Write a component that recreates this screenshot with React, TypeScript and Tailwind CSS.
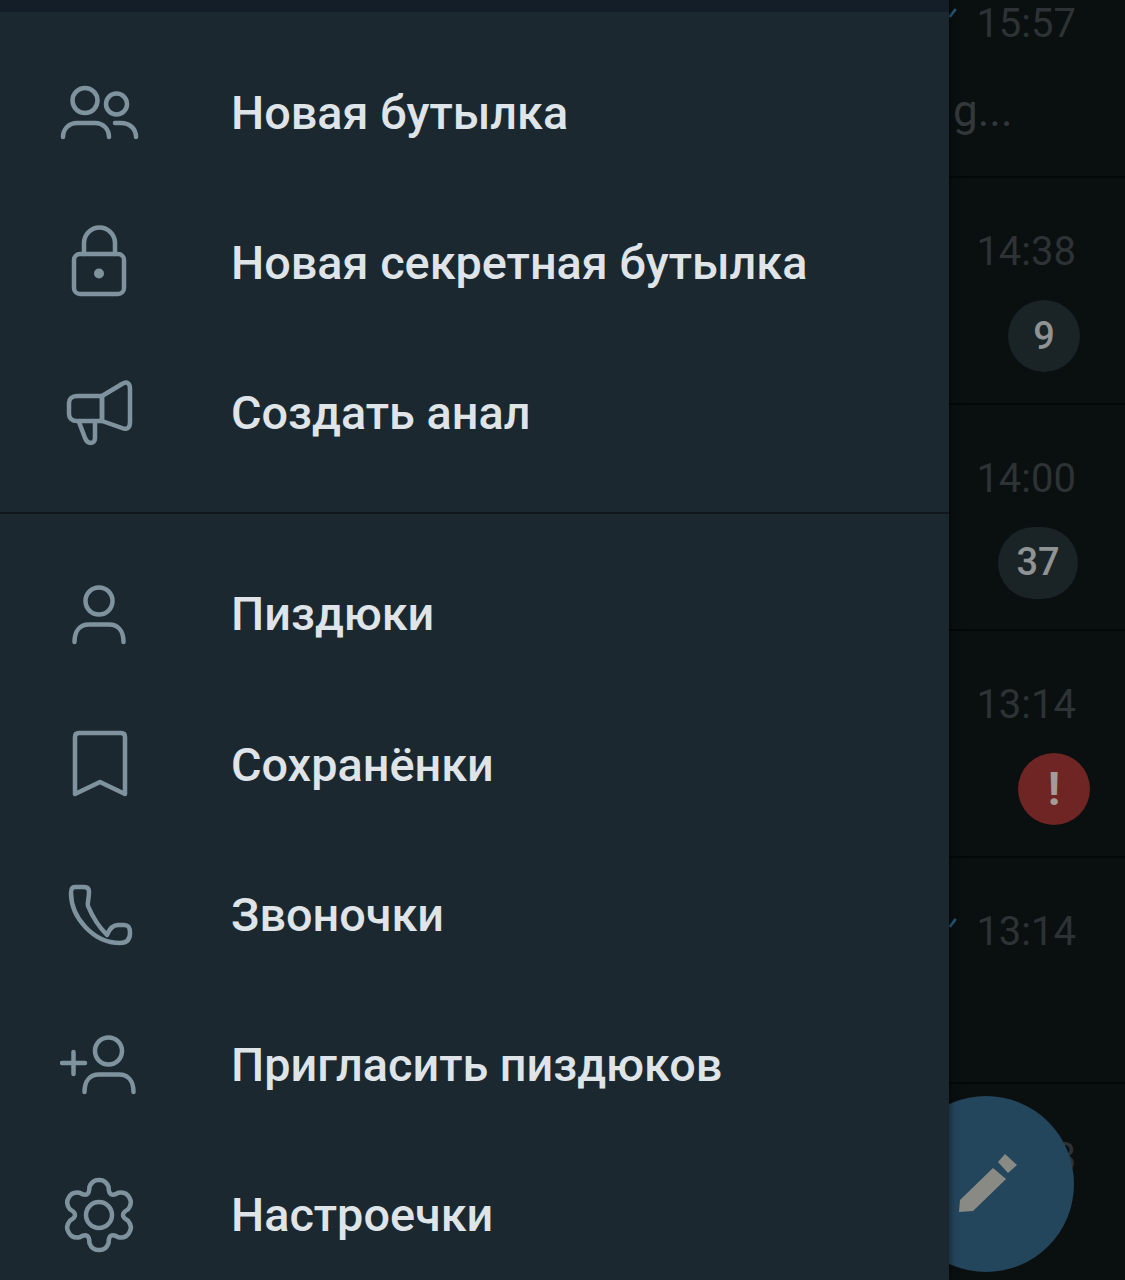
import type { ReactNode } from 'react';

const gearPath = () => {
  const pts: string[] = [];
  for (let i = 0; i < 6; i++) {
    const mid = -90 + i * 60;
    const at = (deg: number, r: number) => {
      const a = (deg * Math.PI) / 180;
      return `${(39 + r * Math.cos(a)).toFixed(1)} ${(39 + r * Math.sin(a)).toFixed(1)}`;
    };
    const cmd = i === 0 ? 'M' : 'L';
    pts.push(`${cmd}${at(mid - 19, 29.5)}`);
    pts.push(`Q${at(mid - 11, 36)} ${at(mid, 35)}`);
    pts.push(`Q${at(mid + 11, 36)} ${at(mid + 19, 29.5)}`);
    pts.push(`Q${at(mid + 30, 19)} ${at(mid + 41, 29.5)}`);
  }
  return pts.join(' ') + ' Z';
};

const Icon = ({ children }: { children: ReactNode }) => (
  <svg
    viewBox="0 0 80 80"
    fill="none"
    stroke="#7e939e"
    strokeWidth="4.5"
    strokeLinecap="round"
    strokeLinejoin="round"
    className="w-20 h-20 shrink-0"
  >
    {children}
  </svg>
);

const icons = {
  users: (
    <Icon>
      <circle cx="25" cy="27.5" r="12.5" />
      <circle cx="56.5" cy="31" r="10.5" />
      <path d="M3 64C3 56 9 50 17 50H35C43 50 49 56 49 64" />
      <path d="M55 50H61C70 50 76 56 76 64" />
    </Icon>
  ),
  lock: (
    <Icon>
      <rect x="14" y="31" width="50" height="40" rx="6" />
      <path d="M24 31V20A15.5 15.5 0 0 1 55 20V31" />
      <circle cx="39" cy="50.5" r="5" fill="#7e939e" stroke="none" />
    </Icon>
  ),
  megaphone: (
    <Icon>
      <path d="M42 22H17C12 22 9 25 9 29V40C9 44 12 47 17 47H42Z" />
      <path d="M42 22L62 10C67 7 70 9 70 15V48C70 54 67 56 62 54L42 47Z" />
      <path d="M19 48L25 64C28 71 35 70 35 64V48" />
    </Icon>
  ),
  person: (
    <Icon>
      <circle cx="39" cy="26" r="13.5" />
      <path d="M14.5 67C14.5 56 20 49.5 29 49.5H49C58 49.5 63.5 56 63.5 67" />
    </Icon>
  ),
  bookmark: (
    <Icon>
      <path d="M15 12Q15 8 19 8H61Q65 8 65 12V69L40 57L15 69Z" />
    </Icon>
  ),
  phone: (
    <Icon>
      <path d="M15 12H24Q29 12 29 17C29 24 27 28 28 31C33 43 39 52 47 60C49 55 52 50 58 50H64C69 50 70 53 70 58C70 65 66 68 60 68C33 68 11 42 11 18C11 14 12 12 15 12Z" />
    </Icon>
  ),
  invite: (
    <Icon>
      <circle cx="48.5" cy="25" r="13.5" />
      <path d="M24.5 66C24.5 55 30 48.5 39 48.5H59C68 48.5 73.5 55 73.5 66" />
      <path d="M2 37H25M13.5 26V48" />
    </Icon>
  ),
  gear: (
    <Icon>
      <path d={gearPath()} />
      <circle cx="39" cy="39" r="13" />
    </Icon>
  ),
};

const MenuRow = ({ icon, label }: { icon: ReactNode; label: string }) => (
  <div className="flex items-center h-[150.25px] pl-[60px]">
    {icon}
    <span className="ml-[91px] text-[46.8px] font-medium leading-none text-[#dfe4e8]">{label}</span>
  </div>
);

const chats = [
  { time: '14:38', badge: '9', badgeClass: 'w-[72px] mr-[-4px] bg-[#1a2427] text-[#8f9393] text-[38px] font-medium' },
  { time: '14:00', badge: '37', badgeClass: 'w-[80px] mr-[-2px] bg-[#1a2427] text-[#8f9393] text-[38px] font-medium' },
  { time: '13:14', badge: '!', badgeClass: 'w-[72px] mr-[-14px] bg-[#6e2523] text-[#a39c9a] text-[46px] font-bold' },
];

const Check = ({ className }: { className: string }) => (
  <svg viewBox="0 0 12 14" className={className} fill="none" stroke="#275a7c" strokeWidth="4">
    <path d="M1 13L10 1" />
  </svg>
);

export default function App() {
  return (
    <div className="relative flex w-[1125px] h-[1280px] overflow-hidden bg-[#0a0f10] font-['Roboto',sans-serif]">
      {/* Drawer */}
      <div className="relative z-10 w-[949px] shrink-0 h-full bg-[#1c2830] shadow-[0_0_8px_rgba(0,0,0,0.6)]">
        <div className="h-3 bg-[#141e29]" />
        <div className="pt-[26px] pb-[23px]">
          <MenuRow icon={icons.users} label="Новая бутылка" />
          <MenuRow icon={icons.lock} label="Новая секретная бутылка" />
          <MenuRow icon={icons.megaphone} label="Создать анал" />
        </div>
        <div className="h-0.5 bg-[#10181e]" />
        <div className="pt-[26px]">
          <MenuRow icon={icons.person} label="Пиздюки" />
          <MenuRow icon={icons.bookmark} label="Сохранёнки" />
          <MenuRow icon={icons.phone} label="Звоночки" />
          <MenuRow icon={icons.invite} label="Пригласить пиздюков" />
          <MenuRow icon={icons.gear} label="Настроечки" />
        </div>
      </div>

      {/* Dimmed chat list behind the drawer */}
      <div className="flex-1 min-w-0">
        <div className="relative h-[178px] border-b-2 border-[#050808] pr-[49px] text-right">
          <Check className="absolute left-0 top-[8px] w-2 h-[10px]" />
          <div className="pt-[2px] text-[40px] leading-[44px] text-[#2d3234]">15:57</div>
          <div className="mt-[42px] pl-[4px] text-left text-[44px] leading-[46px] text-[#33383a]">g...</div>
        </div>
        {chats.map((c) => (
          <div key={c.time + c.badge} className="h-[226.5px] border-b-2 border-[#050808] flex flex-col items-end pr-[49px] pt-[52px]">
            <div className="text-[40px] leading-[44px] text-[#2d3234]">{c.time}</div>
            <div className={`${c.badgeClass} mt-[26px] h-[72px] rounded-full flex items-center justify-center`}>
              {c.badge}
            </div>
          </div>
        ))}
        <div className="relative h-[226.5px] border-b-2 border-[#050808] flex flex-col items-end pr-[49px] pt-[52px]">
          <Check className="absolute left-0 top-[58px] w-2 h-[14px]" />
          <div className="text-[40px] leading-[44px] text-[#2d3234]">13:14</div>
        </div>
        <div className="flex flex-col items-end pr-[49px] pt-[52px]">
          <div className="text-[40px] leading-[44px] text-[#2d3234]">13:08</div>
        </div>
      </div>

      {/* Compose button */}
      <div className="absolute left-[898px] top-[1096px] w-44 h-44 rounded-full bg-[#24465c]">
        <svg viewBox="0 0 176 176" className="w-44 h-44" fill="#8a8a85">
          <path d="M100 66L107 58L119 69L110 77Z" />
          <path d="M61 116L62 104L95 72L108 83L75 115Z" />
        </svg>
      </div>
    </div>
  );
}
